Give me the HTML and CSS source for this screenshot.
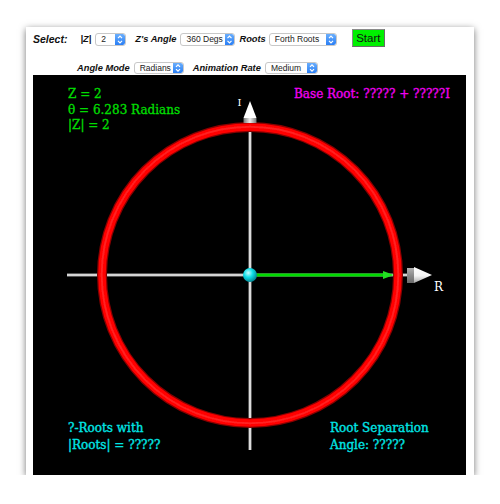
FILE: index.html
```html
<!DOCTYPE html>
<html>
<head>
<meta charset="utf-8">
<link rel="stylesheet" href="styles.css">
</head>
<body>
<div class="page">
  <div class="panel">
    <div class="row row1">
      <span class="lbl big">Select:</span>
      <span class="lbl l-z">|Z|</span>
      <div class="sel s-z"><span class="val">2</span><span class="arr"><svg width="10" height="13" viewBox="0 0 10 13"><path d="M3 5.2 L5 3.2 L7 5.2 M3 7.8 L5 9.8 L7 7.8" fill="none" stroke="#fff" stroke-width="1.2"/></svg></span></div>
      <span class="lbl l-ang">Z's Angle</span>
      <div class="sel s-ang"><span class="val">360 Degs</span><span class="arr"><svg width="9" height="13" viewBox="0 0 9 13"><path d="M2.5 5.2 L4.5 3.2 L6.5 5.2 M2.5 7.8 L4.5 9.8 L6.5 7.8" fill="none" stroke="#fff" stroke-width="1.2"/></svg></span></div>
      <span class="lbl l-roots">Roots</span>
      <div class="sel s-roots"><span class="val">Forth Roots</span><span class="arr"><svg width="10" height="13" viewBox="0 0 10 13"><path d="M3 5.2 L5 3.2 L7 5.2 M3 7.8 L5 9.8 L7 7.8" fill="none" stroke="#fff" stroke-width="1.2"/></svg></span></div>
      <button class="start">Start</button>
    </div>
    <div class="row row2">
      <span class="lbl l-mode">Angle Mode</span>
      <div class="sel sm s-mode"><span class="val">Radians</span><span class="arr"><svg width="10" height="12" viewBox="0 0 10 12"><path d="M3 4.8 L5 2.8 L7 4.8 M3 7.2 L5 9.2 L7 7.2" fill="none" stroke="#fff" stroke-width="1.2"/></svg></span></div>
      <span class="lbl l-rate">Animation Rate</span>
      <div class="sel sm s-rate"><span class="val">Medium</span><span class="arr"><svg width="10" height="12" viewBox="0 0 10 12"><path d="M3 4.8 L5 2.8 L7 4.8 M3 7.2 L5 9.2 L7 7.2" fill="none" stroke="#fff" stroke-width="1.2"/></svg></span></div>
    </div>
    <svg class="plot" width="433" height="400" viewBox="0 0 433 400">
      <defs>
        <radialGradient id="ball" cx="0.38" cy="0.35" r="0.7">
          <stop offset="0" stop-color="#c8ffff"/>
          <stop offset="0.45" stop-color="#10e0e8"/>
          <stop offset="1" stop-color="#007c8a"/>
        </radialGradient>
        <linearGradient id="coneR" x1="0" y1="0" x2="0" y2="1">
          <stop offset="0" stop-color="#ffffff"/>
          <stop offset="0.55" stop-color="#f4f4f4"/>
          <stop offset="1" stop-color="#a8a8a8"/>
        </linearGradient>
        <linearGradient id="cylR" x1="0" y1="0" x2="0" y2="1">
          <stop offset="0" stop-color="#b0b0b0"/>
          <stop offset="0.5" stop-color="#8a8a8a"/>
          <stop offset="1" stop-color="#6a6a6a"/>
        </linearGradient>
        <linearGradient id="cylT" x1="0" y1="0" x2="1" y2="0">
          <stop offset="0" stop-color="#777"/>
          <stop offset="0.5" stop-color="#eee"/>
          <stop offset="1" stop-color="#777"/>
        </linearGradient>
        <filter id="soft" x="-10%" y="-10%" width="120%" height="120%">
          <feGaussianBlur stdDeviation="0.7"/>
        </filter>
      </defs>
      <rect x="0" y="0" width="433" height="400" fill="#000"/>
      <!-- axes -->
      <line x1="34" y1="200" x2="375" y2="200" stroke="#a8a8a8" stroke-width="3"/>
      <line x1="34" y1="200" x2="375" y2="200" stroke="#ffffff" stroke-width="1.2"/>
      <line x1="217" y1="47" x2="217" y2="375" stroke="#a8a8a8" stroke-width="3"/>
      <line x1="217" y1="47" x2="217" y2="375" stroke="#ffffff" stroke-width="1.2"/>
      <!-- ring -->
      <g filter="url(#soft)">
        <circle cx="217" cy="200" r="148" fill="none" stroke="#8a0000" stroke-width="10"/>
        <circle cx="217" cy="200" r="148" fill="none" stroke="#ff0000" stroke-width="7.5"/>
        <circle cx="217" cy="200" r="148.3" fill="none" stroke="#ff2020" stroke-width="2"/>
      </g>
      <!-- top arrow -->
      <rect x="210.5" y="43" width="13" height="5" fill="url(#cylT)"/>
      <polygon points="217,26 223.5,43 210.5,43" fill="#ffffff"/>
      <!-- right arrow -->
      <rect x="374" y="193" width="7" height="15" fill="url(#cylR)"/>
      <polygon points="381,192 399,200 381,208" fill="url(#coneR)"/>
      <!-- vector -->
      <line x1="217" y1="200" x2="352" y2="200" stroke="#00dc00" stroke-width="3"/>
      <polygon points="350,196 361,200 350,204" fill="#22e022"/>
      <circle cx="217" cy="200" r="7" fill="url(#ball)"/>
      <text class="axl" x="204.5" y="31" font-size="10">I</text>
      <text class="axl" x="401" y="216" font-size="12">R</text>
      <text class="t green" x="35" y="23">Z = 2</text>
      <text class="t green" x="35" y="38.5">θ = 6.283 Radians</text>
      <text class="t green" x="35" y="54">|Z| = 2</text>
      <text class="t magenta" x="261" y="23">Base Root: ????? + ?????I</text>
      <text class="t cyan" x="35" y="357">?-Roots with</text>
      <text class="t cyan" x="35" y="374">|Roots| = ?????</text>
      <text class="t cyan" x="297" y="357">Root Separation</text>
      <text class="t cyan" x="297" y="374">Angle: ?????</text>
    </svg>
  </div>
</div>
</body>
</html>
```

FILE: styles.css
```css
html, body {
  margin: 0;
  padding: 0;
  background: #ffffff;
}
.page {
  padding: 27px 0 0 26px;
}
.panel {
  width: 448px;
  height: 448px;
  box-sizing: border-box;
  padding: 2px 8px 0 7px;
  background: #ffffff;
  box-shadow: 0 2px 7px rgba(0, 0, 0, 0.55);
  font-family: "Liberation Sans", Arial, sans-serif;
}
.row {
  display: flex;
  align-items: center;
}
.row1 {
  height: 18px;
}
.row2 {
  height: 12px;
  margin-top: 15px;
  padding-left: 44px;
}
.lbl {
  font-weight: bold;
  font-style: italic;
  font-size: 9.3px;
  color: #111;
  white-space: nowrap;
}
.lbl.big {
  font-size: 10.5px;
  margin-right: 13px;
  margin-top: 2px;
}
.l-z { margin-right: 4px; margin-top: 2px; }
.l-ang { margin-left: 9px; margin-right: 4px; margin-top: 2px; }
.l-roots { margin-left: 4px; margin-right: 3px; margin-top: 2px; }
.l-mode { margin-right: 4px; }
.l-rate { margin-left: 9px; margin-right: 4px; }
.sel {
  display: flex;
  align-items: stretch;
  height: 13px;
  box-sizing: border-box;
  border: 1px solid #c8c8c8;
  border-radius: 3px;
  background: #fff;
  margin-top: 3px;
  overflow: hidden;
}
.sel.sm {
  height: 12px;
  margin-top: 0;
}
.sel .val {
  flex: 1;
  font-size: 8.5px;
  line-height: 11px;
  color: #222;
  padding-left: 5px;
  white-space: nowrap;
}
.sel.sm .val {
  line-height: 10px;
}
.sel .arr {
  display: flex;
  align-items: center;
  justify-content: center;
  width: 10px;
  background: linear-gradient(#6aaefc, #2a7ff5);
  border-radius: 0 2px 2px 0;
}
.sel .arr svg { display: block; }
.s-z { width: 31px; }
.s-ang { width: 55px; }
.s-ang .arr { width: 9px; }
.s-roots { width: 68px; }
.s-mode { width: 50px; }
.s-rate { width: 53px; }
.start {
  margin-left: 15px;
  width: 33px;
  height: 18px;
  padding: 0;
  background: #00f000;
  border: 1px solid #8a8a8a;
  border-right-color: #6a6a6a;
  border-bottom-color: #6a6a6a;
  font-family: "Liberation Sans", Arial, sans-serif;
  font-size: 11.5px;
  color: #111;
  line-height: 16px;
}
.plot {
  display: block;
  margin-top: 1px;
}
.t {
  font-family: "DejaVu Serif", "Liberation Serif", serif;
  font-size: 12px;
  stroke-width: 0.35px;
}
.green { fill: #00dc00; stroke: #00dc00; }
.magenta { fill: #f000f0; stroke: #f000f0; }
.cyan { fill: #00e6e6; stroke: #00e6e6; }
.axl {
  font-family: "DejaVu Serif", "Liberation Serif", serif;
  fill: #ffffff;
}
```
